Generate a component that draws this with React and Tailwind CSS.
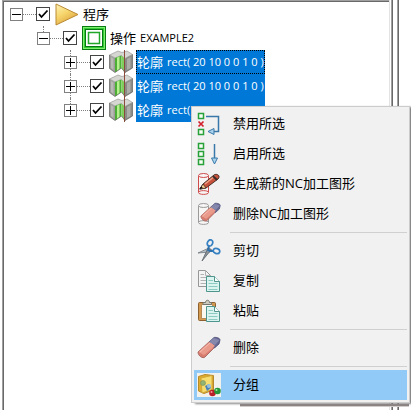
import React from "react";

const svgProps = { width: 24, height: 24, viewBox: "0 0 24 24", fill: "none", "aria-hidden": true };

const PlayIcon = () => (
  <svg {...svgProps}>
    <defs>
      <linearGradient id="gold" x1="0" y1="0" x2="0.6" y2="1">
        <stop offset="0" stopColor="#fff3b8" />
        <stop offset="0.5" stopColor="#f6d56c" />
        <stop offset="1" stopColor="#dda03a" />
      </linearGradient>
    </defs>
    <path d="M1 2 L23 12.500 L1 23 Z" fill="url(#gold)" stroke="#b98a33" />
  </svg>
);

const OperationIcon = () => (
  <svg {...svgProps}>
    <rect x="0.500" y="0.500" width="23" height="23" fill="#35c935" stroke="#087a12" />
    <rect x="1.500" y="1.500" width="21" height="21" stroke="#7df06e" />
    <rect x="3.500" y="3.500" width="17" height="17" fill="#fff" stroke="#067812" />
    <rect x="6.500" y="6.500" width="11" height="11" fill="#fff" stroke="#22a62a" strokeWidth="1.500" />
  </svg>
);

const ContourIcon = () => (
  <svg {...svgProps}>
    <path d="M0.500 5 L9 1 L13 2.500 L18 1 L23.500 4.500 L16 8.500 L12 5.500 L6 8 Z" fill="#d6d6d3" stroke="#8c8c88" strokeWidth="0.600" />
    <path d="M0.500 5 L6 8 V22.500 L0.500 18.500 Z" fill="#9c9c99" />
    <path d="M2 7 L4.500 8.500 V20 L2 18 Z" fill="#b9b9b6" />
    <path d="M6 8 L12.500 5.500 V18 L6 22.500 Z" fill="#4cae35" />
    <path d="M8 7.500 L10.500 6.500 V19 L8 21 Z" fill="#b4f08c" />
    <path d="M12.500 5.500 L16 8.500 V22.500 L12.500 18 Z" fill="#7fce5d" />
    <path d="M16 8.500 L23.500 4.500 V18 L16 22.500 Z" fill="#8b8b88" />
    <path d="M18 9 L21.500 7 V18 L18 20 Z" fill="#adadaa" />
    <path d="M0.500 5 V18.500 L6 22.500 L12.500 18 L16 22.500 L23.500 18 V4.500" stroke="#62625f" strokeWidth="0.700" />
    <path d="M15.500 0 V24" stroke="#8a4b3c" />
  </svg>
);

const Squares = ({ middle = true }) => (
  <g stroke="#28a13b" strokeWidth="1.500" fill="#f7fff5">
    <rect x="1.500" y="1.500" width="5" height="5" />
    {middle && <rect x="1.500" y="9.500" width="5" height="5" />}
    <rect x="1.500" y="17.500" width="5" height="5" />
  </g>
);

const DisableIcon = () => (
  <svg {...svgProps}>
    <Squares middle={false} />
    <path d="M1.500 9.500 L6.500 14.500 M6.500 9.500 L1.500 14.500" stroke="#d3202f" strokeWidth="1.700" />
    <path d="M9 4.500 H21.500 V19.500 H16" stroke="#3978a8" strokeWidth="1.500" />
    <path d="M17 16.500 L11 19.500 L17 22.500 Z" fill="#a9d3ee" stroke="#3978a8" />
  </svg>
);

const EnableIcon = () => (
  <svg {...svgProps}>
    <Squares />
    <path d="M17.500 2 V17" stroke="#3978a8" strokeWidth="1.500" />
    <path d="M14.500 16 L17.500 22 L20.500 16 Z" fill="#a9d3ee" stroke="#3978a8" />
  </svg>
);

const Cylinder = ({ color }) => (
  <g stroke={color} fill="#f8f5f5">
    <path d="M1.500 3.500 V20.500 C1.500 23 11.500 23 11.500 20.500 V3.500" />
    <ellipse cx="6.500" cy="3.500" rx="5" ry="2" />
    <path d="M1.500 20.500 C1.500 18 11.500 18 11.500 20.500" />
  </g>
);

const PencilIcon = () => (
  <svg {...svgProps}>
    <Cylinder color="#cf4b4b" />
    <path d="M3 17 L6 12 L17 3 C20 1 24 4 21 7 L9 16 Z" fill="#c7513b" stroke="#493028" />
    <path d="M8 12 L18 4" stroke="#f0a28a" strokeWidth="1.500" />
    <path d="M3 17 L6 12 L9 16 Z" fill="#f1cf94" stroke="#493028" strokeWidth="0.800" />
    <path d="M2 17.500 L4 14.500 L6 16 Z" fill="#111" />
    <path d="M16 4 L20 8" stroke="#3a2c29" strokeWidth="2" />
  </svg>
);

const EraserShape = () => (
  <g strokeLinejoin="round">
    <path d="M1 16 L13 5 L19 10 L8 21 C6 23 1 20 1 16 Z" fill="#d97c70" stroke="#9c5a55" strokeWidth="0.800" />
    <path d="M12 6 L17 1.500 C19 1 23 2 23 4 L22 8 L17.500 12 Z" fill="#666891" stroke="#4d4e78" strokeWidth="0.800" />
    <path d="M1.500 16 L13 5.500 L18 10 L7 19 Z" fill="#e99a8b" />
    <path d="M12 6 L17 2 L22.500 4 L18 9 Z" fill="#8587ad" />
    <path d="M3 16 L13 7" stroke="#f6bcae" />
  </g>
);

const EraseDrawingIcon = () => (
  <svg {...svgProps}>
    <Cylinder color="#9a9a9a" />
    <g transform="translate(3 0) scale(0.880)">
      <EraserShape />
    </g>
  </svg>
);

const DeleteIcon = () => (
  <svg {...svgProps}>
    <EraserShape />
  </svg>
);

const CutIcon = () => (
  <svg {...svgProps}>
    <path d="M1 14 L12 9 L15 11 L13 13 Z" fill="#b8bfc5" stroke="#6e777e" strokeWidth="0.800" />
    <path d="M5 22 L11 9 L14 11 Z" fill="#8a949c" stroke="#59636a" strokeWidth="0.800" />
    <path d="M11 12 L12 6 M12 12 L17 12" stroke="#2c70b0" strokeWidth="2" />
    <ellipse cx="13" cy="4" rx="2.500" ry="3.300" transform="rotate(25 13 4)" stroke="#3780c2" strokeWidth="1.700" />
    <ellipse cx="19.500" cy="12" rx="3.300" ry="2.500" transform="rotate(20 19.500 12)" stroke="#3780c2" strokeWidth="1.700" />
  </svg>
);

const TealPage = () => (
  <g>
    <path d="M9.500 7.500 H17.500 L22.500 12.500 V22.500 H9.500 Z" fill="#dbf4ef" stroke="#4f958f" />
    <path d="M17.500 7.500 V12.500 H22.500" fill="#fff" stroke="#4f958f" />
    <path d="M11.500 11.500 H16 M11.500 14.500 H20.500 M11.500 17.500 H20.500 M11.500 20.500 H20.500" stroke="#8ccbc2" />
  </g>
);

const CopyIcon = () => (
  <svg {...svgProps}>
    <path d="M1.500 1.500 H8.500 L13.500 6.500 V17.500 H1.500 Z" fill="#f4f4f4" stroke="#969696" />
    <path d="M8.500 1.500 V6.500 H13.500 M3.500 5.500 H7 M3.500 8.500 H11 M3.500 11.500 H11 M3.500 14.500 H11" stroke="#b2b2b2" />
    <TealPage />
  </svg>
);

const PasteIcon = () => (
  <svg {...svgProps}>
    <rect x="1.500" y="3.500" width="17" height="18" rx="1" fill="#d49a50" stroke="#8d602f" />
    <path d="M4.500 5.500 H15.500 V19.500 H4.500 Z" fill="#fbf8ef" stroke="#b78a56" />
    <path d="M6 5.500 V3.500 H8.500 C8.500 0.500 12.500 0.500 12.500 3.500 H14.500 V5.500 Z" fill="#c9c9bd" stroke="#77766c" />
    <TealPage />
  </svg>
);

const GroupIcon = () => (
  <svg {...svgProps}>
    <path d="M0 0 H24 V24 H0 Z" fill="#f2f1ec" />
    <path d="M1.500 3.500 L8 1.500 L16.500 2.500 V17 L7 20.500 L1.500 18 Z" fill="#dfac2d" stroke="#b6892a" />
    <path d="M4 5 L15 2.500 V16.500 L5 20 Z" fill="#f7dd70" stroke="#cba132" strokeWidth="0.800" />
    <circle cx="6" cy="10" r="2.500" fill="#92b474" stroke="#77905b" strokeWidth="0.600" />
    <path d="M8 13 L12 11 L14 15 L10 18 Z" fill="#4b82b5" />
    <circle cx="12" cy="13" r="2" fill="#99c1dc" />
    <circle cx="15.500" cy="20" r="3.300" fill="#b91f29" />
    <circle cx="20.500" cy="18" r="3.300" fill="#24963a" />
    <circle cx="14.500" cy="19" r="1" fill="#f39a97" />
    <circle cx="19.500" cy="17" r="1" fill="#a6e5a3" />
  </svg>
);

const treeRows = [
  { id: "program", name: "程序", detail: "", indent: "pl-[6px]", icon: PlayIcon, open: true, first: true },
  { id: "operation", name: "操作", detail: "EXAMPLE2", indent: "pl-[33px]", icon: OperationIcon, open: true },
  { id: "rect1", name: "轮廓", detail: "rect( 20 10 0 0 1 0 )", indent: "pl-[60px]", icon: ContourIcon, selected: true, focused: true, more: true },
  { id: "rect2", name: "轮廓", detail: "rect( 20 10 0 0 1 0 )", indent: "pl-[60px]", icon: ContourIcon, selected: true, more: true },
  { id: "rect3", name: "轮廓", detail: "rect( 20 10 0 0 1 0 )", indent: "pl-[60px]", icon: ContourIcon, selected: true },
];

const menuGroups = [
  [
    { label: "禁用所选", icon: DisableIcon },
    { label: "启用所选", icon: EnableIcon },
    { label: "生成新的NC加工图形", icon: PencilIcon },
    { label: "删除NC加工图形", icon: EraseDrawingIcon },
  ],
  [
    { label: "剪切", icon: CutIcon },
    { label: "复制", icon: CopyIcon },
    { label: "粘贴", icon: PasteIcon },
  ],
  [{ label: "删除", icon: DeleteIcon }],
  [{ label: "分组", icon: GroupIcon, active: true }],
];

function TreeRow({ row }) {
  const Icon = row.icon;
  return (
    <li className={`flex h-6 items-center ${row.indent}`}>
      <div className="flex h-6 w-[13px] flex-col items-center">
        <span className={`h-[6px] border-l border-dotted ${row.first ? "border-transparent" : "border-[#808080]"}`} />
        <button type="button" aria-label={`${row.open ? "收起" : "展开"} ${row.name}`} className="block size-[13px] shrink-0 bg-white">
          <svg width="13" height="13" viewBox="0 0 13 13" fill="none" aria-hidden="true">
            <rect x="0.500" y="0.500" width="12" height="12" stroke="#808080" />
            <path d={row.open ? "M2 6.500 H11" : "M2 6.500 H11 M6.500 2 V11"} stroke="#000" />
          </svg>
        </button>
        <span className={`h-[5px] border-l border-dotted ${row.more ? "border-[#808080]" : "border-transparent"}`} />
      </div>
      <span className="w-[13px] border-t border-dotted border-[#808080]" />
      <span className="grid size-[14px] shrink-0">
        <input
          id={row.id}
          type="checkbox"
          defaultChecked
          className="peer col-start-1 row-start-1 size-[14px] appearance-none border border-[#444] bg-white"
        />
        <svg className="pointer-events-none invisible col-start-1 row-start-1 peer-checked:visible" width="14" height="14" viewBox="0 0 14 14" fill="none" aria-hidden="true">
          <path d="M3 7 L5.500 10 L11.500 3.500" stroke="#000" strokeWidth="1.800" />
        </svg>
      </span>
      <span className="ml-[5px] mr-[3px] shrink-0">
        <Icon />
      </span>
      <label
        htmlFor={row.id}
        className={`flex h-6 items-center gap-1 whitespace-nowrap px-px pb-px ${row.selected ? "bg-[#0078d7] text-white" : "text-black"} ${row.focused ? "outline-1 -outline-offset-1 outline-dotted outline-black" : ""}`}
      >
        <span>{row.name}</span>
        {row.detail && <span className="text-[11px]">{row.detail}</span>}
      </label>
    </li>
  );
}

function ContextMenu() {
  return (
    <div role="menu" className="absolute left-[191px] right-px top-[106px] border border-[#ccc] bg-[#f1f1f1] p-[2px] shadow-[4px_1px_2px_#888]">
      {menuGroups.map((group, index) => (
        <React.Fragment key={index}>
          {index > 0 && <hr className="my-[3px] ml-[36px] border-t border-[#d0d0d0]" />}
          {group.map(({ label, icon: Icon, active }) => (
            <button
              key={label}
              type="button"
              role="menuitem"
              className={`flex h-[30px] w-full items-center gap-3 pl-[3px] text-left ${active ? "bg-[#91c9f7]" : "hover:bg-[#91c9f7]"}`}
            >
              <Icon />
              <span className="pb-[3px]">{label}</span>
            </button>
          ))}
        </React.Fragment>
      ))}
    </div>
  );
}

export default function App() {
  return (
    <div className="relative flex min-h-screen overflow-hidden bg-white pl-[2px] font-['Open_Sans','Noto_Sans_CJK_SC',sans-serif] text-[13px] leading-4 text-black">
      <main className="flex min-w-0 grow flex-col border-l border-t border-[#a0a0a0]">
        <div className="grow border-l border-t border-[#696969]">
          <ul>
            {treeRows.map((row) => (
              <TreeRow key={row.id} row={row} />
            ))}
          </ul>
        </div>
      </main>
      <div className="flex w-[22px] shrink-0">
        <span className="mr-px w-px bg-[#e3e3e3]" />
        <span className="mr-1 w-[2px] border-l border-[#a0a0a0] bg-[#696969]" />
        <span className="w-[2px] border-l border-[#a0a0a0] bg-[#696969]" />
      </div>
      <div className="absolute left-[240px] right-[2px] top-[404px] h-[3px] border-b border-[#d0cccc] bg-[#8c8484]" />
      <ContextMenu />
    </div>
  );
}
